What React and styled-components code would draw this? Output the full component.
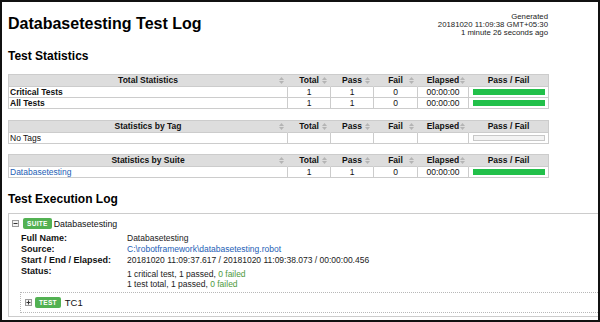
import React from 'react';
import styled, { createGlobalStyle } from 'styled-components';

const GlobalStyle = createGlobalStyle`
  html, body {
    margin: 0;
    padding: 0;
    background: #ffffff;
  }
  body {
    font-family: "Liberation Sans", Arial, sans-serif;
    color: #000000;
  }
`;

const Frame = styled.div`
  width: 600px;
  height: 322px;
  box-sizing: border-box;
  border: 2px solid #111111;
  overflow: hidden;
  padding-left: 6px;
  background: #ffffff;
`;

const Header = styled.header`
  display: flex;
  justify-content: space-between;
  align-items: flex-start;
  width: 540px;
  padding-top: 11px;
`;

const Title = styled.h1`
  margin: 2px 0 0;
  font-size: 16px;
  line-height: 18px;
  font-weight: bold;
`;

const Generated = styled.div`
  font-size: 7.8px;
  line-height: 8px;
  text-align: right;
  color: #222222;
`;

const SectionTitle = styled.h2`
  margin: ${p => p.$top}px 0 0;
  font-size: 12px;
  line-height: 14px;
  font-weight: bold;
`;

const StatTable = styled.table`
  width: 540px;
  table-layout: fixed;
  border-collapse: separate;
  border-spacing: 0;
  border-top: 1px solid #cccccc;
  border-left: 1px solid #cccccc;
  margin-top: ${p => p.$top}px;
  font-size: 8.5px;
  color: #111111;
`;

const Th = styled.th`
  position: relative;
  height: 11px;
  line-height: 11px;
  padding: 0;
  background: #dddddd;
  border-bottom: 1px solid #cccccc;
  border-right: 1px solid ${p => (p.$last ? '#cccccc' : '#dddddd')};
  font-weight: bold;
  text-align: center;
  white-space: nowrap;
`;

const Td = styled.td`
  height: 10px;
  line-height: 10px;
  padding: ${p => (p.$name ? '0 0 0 1px' : '0')};
  border-bottom: 1px solid #cccccc;
  border-right: 1px solid #cccccc;
  text-align: ${p => (p.$name ? 'left' : 'center')};
  font-weight: ${p => (p.$bold ? 'bold' : 'normal')};
  vertical-align: middle;
  white-space: nowrap;
`;

const SortMark = styled.svg`
  position: absolute;
  right: 3px;
  top: 2px;
`;

const Bar = styled.div`
  height: 4px;
  margin: 0 3px 0 4px;
  border: 1px solid ${p => (p.$empty ? '#c8c8c8' : '#22c04a')};
  background: ${p => (p.$empty ? '#f3f3f3' : '#22c04a')};
`;

const Link = styled.a`
  color: #2360b5;
  text-decoration: none;
`;

const SuiteBox = styled.div`
  margin-top: 7px;
  width: 640px;
  border: 1px solid #cccccc;
  padding: 0 0 3px;
`;

const ItemHead = styled.div`
  display: flex;
  align-items: center;
  height: ${p => p.$height}px;
  padding: ${p => p.$pad};
`;

const ToggleBox = styled.span`
  display: flex;
  align-items: center;
  justify-content: center;
  width: 7px;
  height: 7px;
  box-sizing: border-box;
  border: 1px solid #9a9a9a;
  background: #f2f2f2;
  margin-right: ${p => p.$gap}px;
`;

const Badge = styled.span`
  display: inline-block;
  height: 11px;
  line-height: 11px;
  padding: 0 4px;
  border-radius: 2px;
  background: #52b152;
  color: #ffffff;
  font-size: 6.5px;
  font-weight: bold;
  letter-spacing: 0.3px;
  margin-right: ${p => p.$gap}px;
`;

const ItemName = styled.span`
  font-size: ${p => p.$size}px;
  color: #111111;
`;

const MetaGrid = styled.div`
  display: grid;
  grid-template-columns: 106px 1fr;
  margin: 4px 0 0 12px;
`;

const MetaLabel = styled.div`
  font-size: 9px;
  line-height: 11px;
  font-weight: bold;
  color: #111111;
`;

const MetaValue = styled.div`
  font-size: 8.5px;
  line-height: ${p => (p.$multi ? 10 : 11)}px;
  padding-top: ${p => (p.$multi ? 3 : 0)}px;
  color: #222222;
`;

const Ok = styled.span`
  color: #4e9a3c;
`;

const TestBox = styled.div`
  margin: 3px 0 0 11px;
  width: 620px;
  border: 1px dotted #b8b8b8;
`;

const Sort = () => (
  <SortMark width="5" height="7" viewBox="0 0 5 7">
    <polygon points="2.5,0 5,3 0,3" fill="#b4b4b4" />
    <polygon points="0,4 5,4 2.5,7" fill="#b4b4b4" />
  </SortMark>
);

const Toggle = ({ open, gap }) => (
  <ToggleBox $gap={gap}>
    <svg width="5" height="5" viewBox="0 0 5 5">
      <path d="M0.5 2.5H4.5" stroke="#333" strokeWidth="1" />
      {!open && <path d="M2.5 0.5V4.5" stroke="#333" strokeWidth="1" />}
    </svg>
  </ToggleBox>
);

const cols = [279, 43, 43, 44, 51, 80];

const StatsBlock = ({ title, rows, top, bold }) => (
  <StatTable $top={top}>
    <colgroup>
      {cols.map((w, i) => <col key={i} style={{ width: w }} />)}
    </colgroup>
    <thead>
      <tr>
        <Th>{title}<Sort /></Th>
        <Th>Total<Sort /></Th>
        <Th>Pass<Sort /></Th>
        <Th>Fail<Sort /></Th>
        <Th>Elapsed<Sort /></Th>
        <Th $last>Pass / Fail</Th>
      </tr>
    </thead>
    <tbody>
      {rows.map(r => (
        <tr key={r.name}>
          <Td $name $bold={bold}>{r.link ? <Link href="#">{r.name}</Link> : r.name}</Td>
          <Td>{r.total}</Td>
          <Td>{r.pass}</Td>
          <Td>{r.fail}</Td>
          <Td>{r.elapsed}</Td>
          <Td><Bar $empty={r.empty} /></Td>
        </tr>
      ))}
    </tbody>
  </StatTable>
);

const totalRows = [
  { name: 'Critical Tests', total: 1, pass: 1, fail: 0, elapsed: '00:00:00' },
  { name: 'All Tests', total: 1, pass: 1, fail: 0, elapsed: '00:00:00' },
];

const tagRows = [{ name: 'No Tags', total: '', pass: '', fail: '', elapsed: '', empty: true }];

const suiteRows = [
  { name: 'Databasetesting', total: 1, pass: 1, fail: 0, elapsed: '00:00:00', link: true },
];

export default function App() {
  return (
    <>
      <GlobalStyle />
      <Frame>
        <Header>
          <Title>Databasetesting Test Log</Title>
          <Generated>
            Generated<br />
            20181020 11:09:38 GMT+05:30<br />
            1 minute 26 seconds ago
          </Generated>
        </Header>

        <SectionTitle $top={12}>Test Statistics</SectionTitle>
        <StatsBlock title="Total Statistics" rows={totalRows} top={11} bold />
        <StatsBlock title="Statistics by Tag" rows={tagRows} top={11} />
        <StatsBlock title="Statistics by Suite" rows={suiteRows} top={10} />

        <SectionTitle $top={14}>Test Execution Log</SectionTitle>
        <SuiteBox>
          <ItemHead $height={11} $pad="4px 0 0 3px">
            <Toggle open gap={4} />
            <Badge $gap={2}>SUITE</Badge>
            <ItemName $size={8.8}>Databasetesting</ItemName>
          </ItemHead>
          <MetaGrid>
            <MetaLabel>Full Name:</MetaLabel>
            <MetaValue>Databasetesting</MetaValue>
            <MetaLabel>Source:</MetaLabel>
            <MetaValue><Link href="#">C:\robotframework\databasetesting.robot</Link></MetaValue>
            <MetaLabel>Start / End / Elapsed:</MetaLabel>
            <MetaValue>20181020 11:09:37.617 / 20181020 11:09:38.073 / 00:00:00.456</MetaValue>
            <MetaLabel>Status:</MetaLabel>
            <MetaValue $multi>
              1 critical test, 1 passed, <Ok>0 failed</Ok><br />
              1 test total, 1 passed, <Ok>0 failed</Ok>
            </MetaValue>
          </MetaGrid>
          <TestBox>
            <ItemHead $height={19} $pad="0 0 0 4px">
              <Toggle gap={3} />
              <Badge $gap={4}>TEST</Badge>
              <ItemName $size={9.5}>TC1</ItemName>
            </ItemHead>
          </TestBox>
        </SuiteBox>
      </Frame>
    </>
  );
}
